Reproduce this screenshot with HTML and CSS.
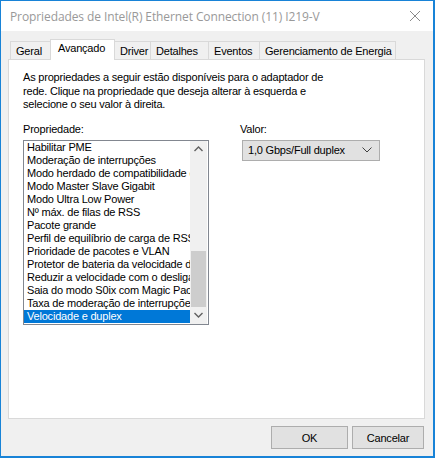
FILE: index.html
```html
<!DOCTYPE html>
<html>
<head>
<meta charset="utf-8">
<link rel="stylesheet" href="styles.css">
</head>
<body>
<div class="window">
  <div class="titlebar">
    <span class="title">Propriedades de Intel(R) Ethernet Connection (11) I219-V</span>
    <svg class="close" width="12" height="12" viewBox="0 0 12 12"><path d="M1 1 L11 11 M11 1 L1 11" stroke="#8a8a8a" stroke-width="1" fill="none"/></svg>
  </div>
  <div class="client">
    <div class="tabs">
      <div class="tab t-geral">Geral</div>
      <div class="tab active t-avan">Avançado</div>
      <div class="tab t-driver">Driver</div>
      <div class="tab t-det">Detalhes</div>
      <div class="tab t-ev">Eventos</div>
      <div class="tab t-ger">Gerenciamento de Energia</div>
    </div>
    <div class="panel">
      <p class="intro">As propriedades a seguir estão disponíveis para o adaptador de<br>rede. Clique na propriedade que deseja alterar à esquerda e<br>selecione o seu valor à direita.</p>
      <div class="cols">
        <div class="col-left">
          <div class="label">Propriedade:</div>
          <div class="listbox">
            <ul class="items">
              <li>Habilitar PME</li>
              <li>Moderação de interrupções</li>
              <li>Modo herdado de compatibilidade de</li>
              <li>Modo Master Slave Gigabit</li>
              <li>Modo Ultra Low Power</li>
              <li>Nº máx. de filas de RSS</li>
              <li>Pacote grande</li>
              <li>Perfil de equilíbrio de carga de RSS</li>
              <li>Prioridade de pacotes e VLAN</li>
              <li>Protetor de bateria da velocidade de</li>
              <li>Reduzir a velocidade com o desligamento</li>
              <li>Saia do modo S0ix com Magic Packet</li>
              <li>Taxa de moderação de interrupções</li>
              <li class="sel">Velocidade e duplex</li>
            </ul>
            <div class="scrollbar">
              <div class="arrow"><svg width="9" height="6" viewBox="0 0 9 6"><path d="M0.5 5 L4.5 1 L8.5 5" stroke="#606060" stroke-width="1.4" fill="none"/></svg></div>
              <div class="track"><div class="thumb"></div></div>
              <div class="arrow"><svg width="9" height="6" viewBox="0 0 9 6"><path d="M0.5 1 L4.5 5 L8.5 1" stroke="#606060" stroke-width="1.4" fill="none"/></svg></div>
            </div>
          </div>
        </div>
        <div class="col-right">
          <div class="label">Valor:</div>
          <div class="combo">
            <span>1,0 Gbps/Full duplex</span>
            <svg width="10" height="6" viewBox="0 0 10 6"><path d="M0.5 0.5 L5 5 L9.5 0.5" stroke="#404040" stroke-width="1" fill="none"/></svg>
          </div>
        </div>
      </div>
    </div>
    <div class="buttons">
      <div class="btn">OK</div>
      <div class="btn">Cancelar</div>
    </div>
  </div>
</div>
</body>
</html>
```
FILE: styles.css
```css
html, body { margin: 0; padding: 0; }
body { width: 435px; height: 458px; overflow: hidden; background: #fff; }
.window {
  box-sizing: border-box;
  width: 435px; height: 458px;
  border-top: 1px solid #1883d7;
  border-left: 1px solid #1883d7;
  border-right: 2px solid #1883d7;
  border-bottom: 2px solid #1883d7;
  display: flex; flex-direction: column;
  background: #f0f0f0;
  font-family: "Liberation Sans", Arial, sans-serif;
  font-size: 11px;
  letter-spacing: -0.2px;
  color: #000;
}
.titlebar {
  height: 30px; background: #fff;
  display: flex; align-items: center; justify-content: space-between;
  padding: 0 10px 0 9px;
}
.title { font-family: "Open Sans", "Noto Sans", sans-serif; font-size: 12px; color: #999; letter-spacing: -0.1px; }
.close { margin-right: 2px; }
.client { flex: 1; display: flex; flex-direction: column; padding: 8px 8px 0 7px; }
.tabs { display: flex; align-items: flex-end; padding-left: 2px; height: 20px; }
.tab {
  box-sizing: border-box; height: 18px;
  border: 1px solid #d9d9d9; border-bottom: none;
  margin-left: -1px; background: #f0f0f0;
  padding: 2px 0 0 5px; line-height: 14px; white-space: nowrap;
}
.tab.active {
  height: 21px; background: #fff; position: relative; z-index: 1;
  margin-bottom: -1px; padding: 1px 0 0 7px;
}
.t-geral { width: 41px; margin-left: 0; }
.t-avan { width: 65px; }
.t-driver { width: 37px; }
.t-det { width: 59px; }
.t-ev { width: 52px; }
.t-ger { width: 137px; }
.panel {
  box-sizing: border-box; height: 360px;
  background: #fff; border: 1px solid #d9d9d9;
  padding: 11px 14px 0 14px;
}
.intro { margin: 0; line-height: 13.5px; }
.cols { display: flex; margin-top: 11px; }
.col-left { width: 186px; }
.col-right { margin-left: 31px; }
.label { line-height: 13px; height: 13px; }
.listbox {
  margin-top: 4px; box-sizing: border-box;
  width: 186px; height: 185px; border: 1px solid #828790;
  display: flex; background: #fff; overflow: hidden;
}
.items { list-style: none; margin: 0; padding: 0; width: 166px; overflow: hidden; }
.items li { height: 13px; line-height: 13px; padding-left: 3px; white-space: nowrap; overflow: hidden; }
.items li.sel { background: #0078d7; color: #fff; }
.scrollbar { width: 17px; background: #f0f0f0; display: flex; flex-direction: column; }
.arrow { height: 17px; display: flex; align-items: center; justify-content: center; }
.track { flex: 1; display: flex; flex-direction: column; justify-content: flex-end; padding: 0 1px 0 1px; }
.thumb { height: 56px; background: #cdcdcd; margin-bottom: 0; }
.combo {
  margin-top: 4px; margin-left: 2px; box-sizing: border-box;
  width: 138px; height: 21px; background: #e1e1e1; border: 1px solid #adadad;
  display: flex; align-items: center; justify-content: space-between;
  padding: 0 7px 0 5px;
}
.buttons { display: flex; justify-content: flex-end; gap: 4px; margin-top: 7px; padding-right: 1px; }
.btn {
  box-sizing: border-box; height: 23px; background: #e1e1e1; border: 1px solid #adadad;
  display: flex; align-items: center; justify-content: center;
}
.btn:first-child { width: 77px; }
.btn:last-child { width: 72px; }
```
